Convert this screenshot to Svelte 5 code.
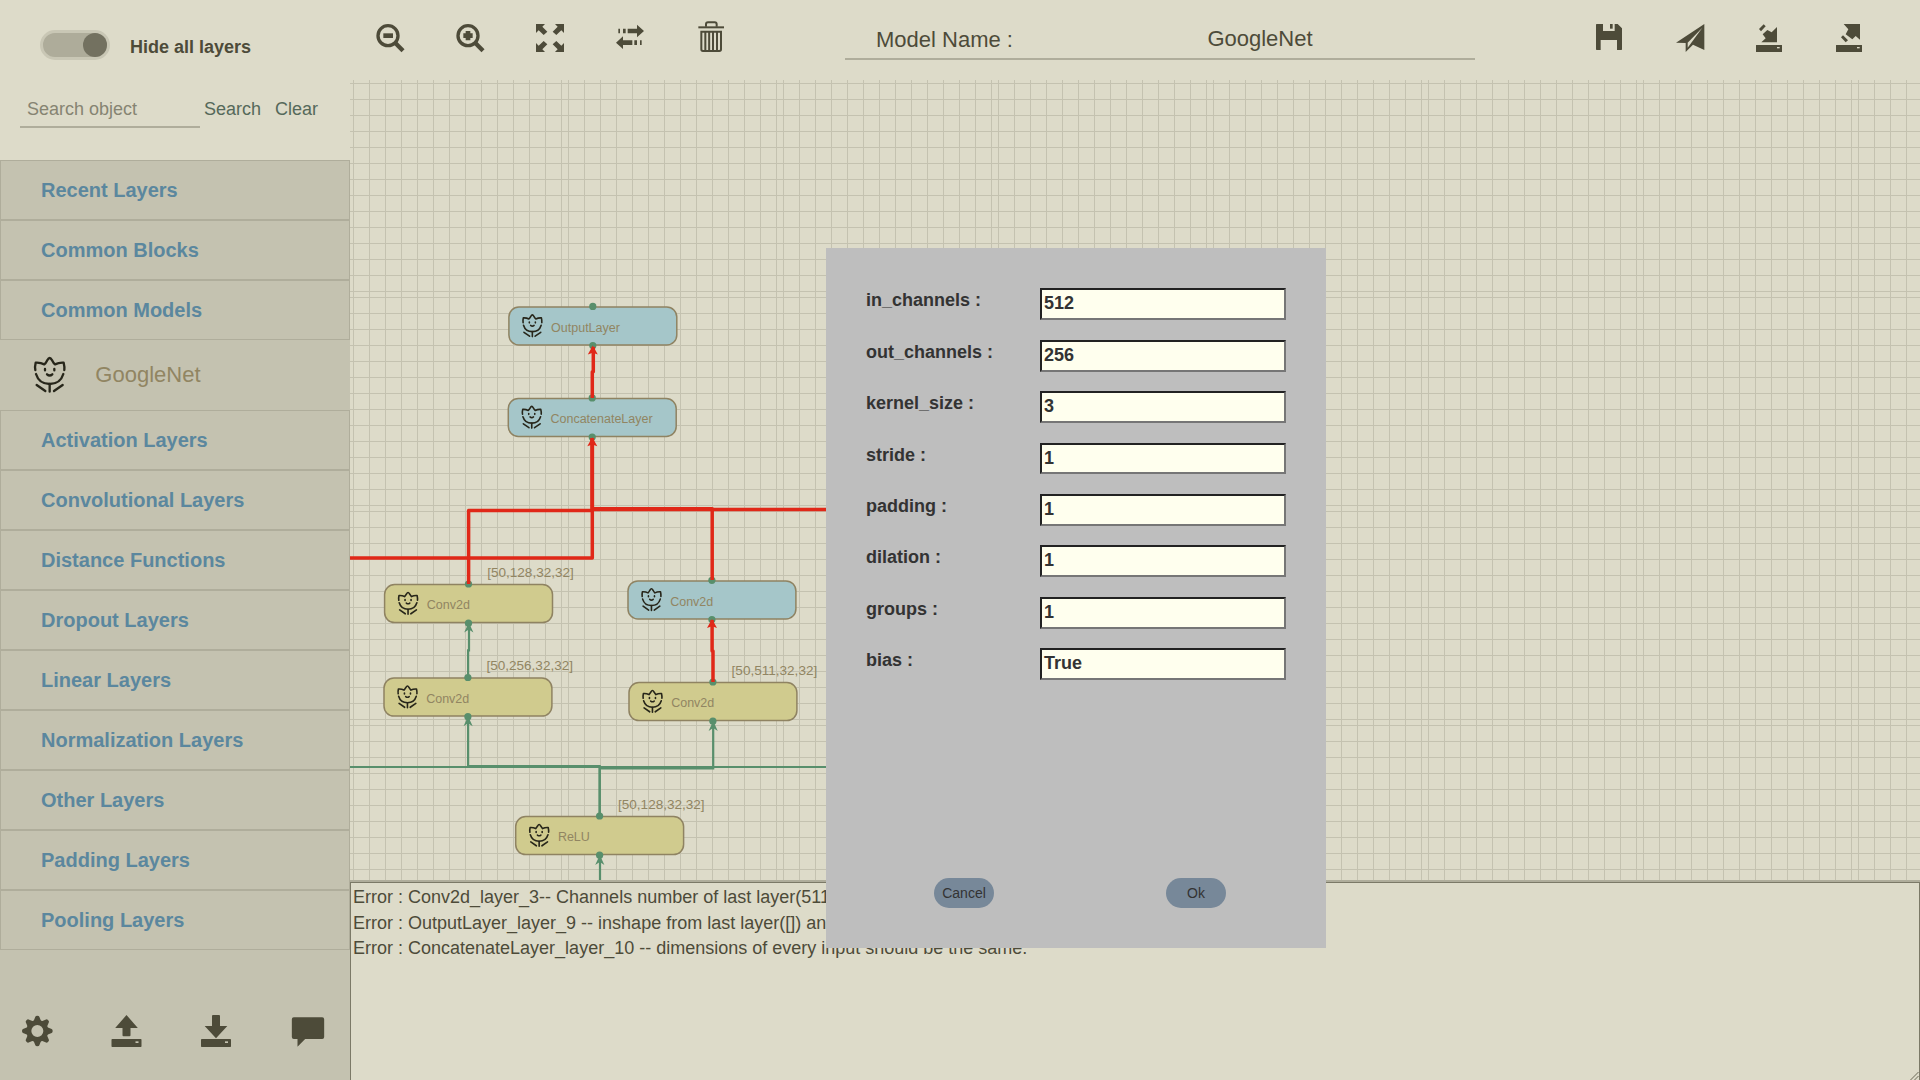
<script>
  const topGroups = ['Recent Layers', 'Common Blocks', 'Common Models'];
  const layerGroups = [
    'Activation Layers',
    'Convolutional Layers',
    'Distance Functions',
    'Dropout Layers',
    'Linear Layers',
    'Normalization Layers',
    'Other Layers',
    'Padding Layers',
    'Pooling Layers'
  ];

  const params = [
    ['in_channels', '512'],
    ['out_channels', '256'],
    ['kernel_size', '3'],
    ['stride', '1'],
    ['padding', '1'],
    ['dilation', '1'],
    ['groups', '1'],
    ['bias', 'True']
  ];

  const nodes = [
    { x: 508.9, y: 307, name: 'OutputLayer', bad: true },
    { x: 508.3, y: 398.5, name: 'ConcatenateLayer', bad: true },
    { x: 384.6, y: 584.6, name: 'Conv2d', bad: false },
    { x: 628, y: 580.9, name: 'Conv2d', bad: true },
    { x: 384, y: 678.1, name: 'Conv2d', bad: false },
    { x: 629, y: 682.6, name: 'Conv2d', bad: false },
    { x: 515.7, y: 816.6, name: 'ReLU', bad: false }
  ];

  const shapes = [
    { x: 487.2, y: 577, text: '[50,128,32,32]' },
    { x: 486.4, y: 670.2, text: '[50,256,32,32]' },
    { x: 731.6, y: 675.2, text: '[50,511,32,32]' },
    { x: 618, y: 809.2, text: '[50,128,32,32]' }
  ];

  const goodEdges = [
    'M468.1 677V650.3H469V623',
    'M468.1 717V766H599.7V815',
    'M713.2 721V768.3H599.7V815',
    'M350 767H900',
    'M600 856V880'
  ];
  const badEdges = [
    'M592.3 398V371.7H593.3V347',
    'M592.3 438V558H350',
    'M592.3 438V510.4H468.6V584',
    'M592.3 438V508.7H712.2V580',
    'M592.3 509.6H900',
    'M713 682V651H712.1V620'
  ];
  const goodArrows = [[468.8, 622.6], [468.1, 716.3], [713.2, 721], [599.8, 855]];
  const badArrows = [[592.8, 345.6], [592.3, 437.2], [712, 619]];

  const errors = [
    'Error : Conv2d_layer_3-- Channels number of last layer(511)',
    'Error : OutputLayer_layer_9 -- inshape from last layer([]) and',
    'Error : ConcatenateLayer_layer_10 -- dimensions of every input should be the same.'
  ];
</script>

{#snippet tulip()}
  <g class="tulip">
    <path d="M7 42Q5 32 8 20Q22 19 34 25Q38 22 42 14Q47 6 50 6Q53 6 58 14Q62 22 66 25Q78 19 92 20Q95 32 94 42" />
    <path d="M9 54Q18 84 50 84Q82 84 91 54" />
    <path d="M36 39V43M64 39V43M42 55Q50 62 58 55" />
    <path d="M50 84V107M11 87L37 105M89 87L63 105" />
  </g>
{/snippet}

<div class="app">
  <aside class="sidebar">
    <div class="toggle-row">
      <div class="toggle"><span class="knob"></span></div>
      <span class="toggle-label">Hide all layers</span>
    </div>
    <div class="search-row">
      <div class="search-field">Search object</div>
      <span class="link">Search</span>
      <span class="link">Clear</span>
    </div>

    {#each topGroups as g}<div class="group">{g}</div>{/each}
    <div class="model">
      <svg class="model-icon" width="33.33" height="37.33" viewBox="0 0 100 112">{@render tulip()}</svg>
      <span>GoogleNet</span>
    </div>
    {#each layerGroups as g}<div class="group">{g}</div>{/each}

    <div class="foot">
      <svg viewBox="0 0 262.5 390">
        <g transform="translate(112 243)">
          {#each [0, 45, 90, 135, 180, 225, 270, 315] as a}
            <path d="M-12 -28L-6 -43Q-5 -46 0 -46Q5 -46 6 -43L12 -28Z" transform="rotate({a})" />
          {/each}
          <circle r="25.5" class="ring" />
        </g>
      </svg>
      <svg viewBox="262.5 0 262.5 390">
        <path d="M378 195L412 234H390V256Q390 259 387 259H369Q366 259 366 256V234H344Z" />
        <rect x="333" y="267" width="90" height="24" rx="2" />
        <rect x="405" y="274" width="9" height="5" class="cut side" />
      </svg>
      <svg viewBox="525 0 262.5 390">
        <path d="M648 265L614 228H636V198Q636 195 639 195H657Q660 195 660 198V228H682Z" />
        <rect x="603" y="267" width="90" height="24" rx="2" />
        <rect x="675" y="274" width="9" height="5" class="cut side" />
      </svg>
      <svg viewBox="787.5 0 262.5 390">
        <path d="M880 202H965Q971 202 971 208V261Q971 267 965 267H914L891 290V267H880Q874 267 874 261V208Q874 202 880 202Z" />
      </svg>
    </div>
  </aside>

  <main class="main">
    <header class="bar">
      <div class="tools">
        <svg viewBox="29 0 240 240">
          <circle cx="143" cy="107" r="30" class="lens" />
          <path d="M165 129L188 152" class="handle" />
          <rect x="129" y="100" width="29" height="14" />
        </svg>
        <svg viewBox="269 0 240 240">
          <circle cx="383" cy="107" r="30" class="lens" />
          <path d="M405 129L428 152" class="handle" />
          <path d="M376 93H390V100H397V114H390V121H376V114H369V100H376Z" />
        </svg>
        <svg viewBox="510 0 240 240">
          <path d="M588 72H615L607 80L622 95L611 105L596 91L588 99Z" />
          <path d="M672 72H645L653 80L638 95L649 105L664 91L672 99Z" />
          <path d="M588 156H615L607 148L622 133L611 123L596 137L588 129Z" />
          <path d="M672 156H645L653 148L638 133L649 123L664 137L672 129Z" />
        </svg>
        <svg viewBox="750 0 240 240">
          <path d="M863 86H891V74L912 93L891 112V100H863Z" />
          <path d="M849 86H857V100H849ZM835 86H840V100H835Z" />
          <path d="M877 121H849V109L828 128L849 147V135H877Z" />
          <path d="M883 121H891V135H883ZM900 121H905V135H900Z" />
        </svg>
        <svg viewBox="990 0 240 240">
          <path d="M1075 79H1152V85H1075Z" />
          <path d="M1098 80V73Q1098 67 1104 67H1124Q1130 67 1130 73V80" class="line" />
          <path d="M1084 95H1143V148Q1143 153 1138 153H1089Q1084 153 1084 148Z" class="line" />
          <path d="M1096 95V153M1107.500 95V153M1119 95V153M1131 95V153" class="line" />
        </svg>
      </div>

      <div class="name-field">
        <span class="name-label">Model Name :</span>
        <span class="name-value">GoogleNet</span>
      </div>

      <div class="tools">
        <svg viewBox="30 0 240 240">
          <path d="M110 72H129V93H164V72H173L186 85V148Q186 150 184 150H171V120H122V150H110Q108 150 108 148V74Q108 72 110 72Z" />
          <rect x="150" y="72" width="8" height="14" />
        </svg>
        <svg viewBox="270 0 240 240">
          <path d="M433 72V150L399 134L377 156V129L348 128Z" />
          <path d="M427 83L383 128V143Z" class="cut" />
        </svg>
        <svg viewBox="510 0 240 240">
          <path d="M651 81V127H604L617 115L608 103L622 90L635 97Z" />
          <path d="M597 87L611 73L617 79L603 94Z" />
          <rect x="588" y="135" width="78" height="21" rx="1" />
          <rect x="651" y="141" width="8" height="4" class="cut" />
        </svg>
        <svg viewBox="750 0 240 240">
          <path d="M851 72H900V119L887 108L877 118L857 103L865 88Z" />
          <path d="M843 112L849 106L864 121L857 127Z" />
          <rect x="828" y="135" width="78" height="21" rx="1" />
          <rect x="891" y="141" width="8" height="4" class="cut" />
        </svg>
      </div>
    </header>

    <section class="canvas">
      <svg width="1570" height="800" viewBox="350 80 1570 800">
        {#each nodes as n}
          <g transform="translate({n.x} {n.y})">
            <rect width="167.9" height="38" rx="10" class="node" class:bad={n.bad} />
            <g transform="translate(12.7 6.6) scale(0.215)" class="small">{@render tulip()}</g>
            <text x="42.2" y="24.9" class="node-name">{n.name}</text>
            <circle cx="83.9" cy="-0.6" r="3.6" class="port" />
            <circle cx="83.9" cy="38.6" r="3.6" class="port" />
          </g>
        {/each}
        {#each shapes as s}<text x={s.x} y={s.y} class="shape">{s.text}</text>{/each}
        {#each goodEdges as d}<path {d} class="edge" />{/each}
        {#each badEdges as d}<path {d} class="edge bad" />{/each}
        {#each goodArrows as [x, y]}
          <path d="M0 0L4.600 10L0 7L-4.600 10Z" transform="translate({x} {y})" class="arrow" />
        {/each}
        {#each badArrows as [x, y]}
          <path d="M0 0L5 9L0 7.200L-5 9Z" transform="translate({x} {y})" class="arrow bad" />
        {/each}
      </svg>
    </section>

    <section class="log">
      {#each errors as e}<div>{e}</div>{/each}
      <svg class="grip" width="9" height="8" viewBox="0 0 9 8">
        <path d="M0.500 8L8.500 0M4.500 8L8.500 4" />
      </svg>
    </section>
  </main>

  <div class="dialog">
    <div class="params">
      {#each params as [label, value]}
        <div class="param">
          <span class="param-label">{label} :</span>
          <div class="param-input">{value}</div>
        </div>
      {/each}
    </div>
    <div class="actions">
      <button>Cancel</button>
      <button>Ok</button>
    </div>
  </div>
</div>

<style>
  :global(body) {
    margin: 0;
    overflow: hidden;
  }
  .app {
    --bg: #dddbc9;
    --panel: #c4c2b0;
    --line: #afad9b;
    --ink: #4d4b39;
    --brown: #918562;
    position: relative;
    display: flex;
    width: 1920px;
    height: 1080px;
    overflow: hidden;
    background: var(--bg);
    color: var(--ink);
    font-family: 'Liberation Sans', Arial, sans-serif;
  }
  .app * {
    box-sizing: border-box;
  }
  svg {
    display: block;
    fill: var(--ink);
  }

  /* Sidebar */
  .sidebar {
    display: flex;
    flex-direction: column;
    width: 350px;
    background: var(--panel);
  }
  .toggle-row {
    display: flex;
    height: 80px;
    padding: 30px 0 0 40px;
    background: var(--bg);
  }
  .toggle {
    display: flex;
    justify-content: flex-end;
    width: 70px;
    height: 30px;
    padding: 0;
    border: 3px solid #c9c7b5;
    border-radius: 15px;
    background: #aeac9a;
  }
  .knob {
    width: 24px;
    height: 24px;
    border-radius: 50%;
    background: #737160;
  }
  .toggle-label {
    margin: 7px 0 0 20px;
    font-size: 18px;
    font-weight: bold;
    line-height: 21px;
  }
  .search-row {
    display: flex;
    height: 80px;
    padding-left: 20px;
    background: var(--bg);
    font-size: 18px;
    line-height: 20px;
  }
  .search-field {
    width: 180px;
    height: 48px;
    padding: 19px 0 0 7px;
    border-bottom: 2px solid var(--line);
    color: #868472;
  }
  .link {
    margin: 19px 0 0 4px;
    color: #55695a;
  }
  .link + .link {
    margin-left: 14px;
  }
  .group {
    height: 60px;
    padding-left: 40px;
    border: 1px solid var(--line);
    color: #5b879e;
    font-size: 20px;
    font-weight: bold;
    line-height: 58px;
  }
  .model {
    display: flex;
    align-items: center;
    gap: 28.67px;
    height: 70px;
    padding-left: 33.33px;
    color: var(--brown);
    font-size: 22px;
  }
  .model-icon {
    margin-top: -1px;
  }
  .tulip path {
    fill: none;
    stroke: #27261a;
    stroke-width: 7;
    stroke-linecap: round;
    stroke-linejoin: round;
  }
  .small .tulip path,
  .small :global(.tulip path) {
    stroke-width: 7.5;
  }
  .foot {
    display: grid;
    grid-template-columns: repeat(4, 87.5px);
    height: 130px;
  }
  .foot svg {
    width: 87.5px;
    height: 130px;
  }
  .ring {
    fill: none;
    stroke: var(--ink);
    stroke-width: 15;
  }
  .cut {
    fill: var(--bg);
  }
  .cut.side {
    fill: var(--panel);
  }

  /* Toolbar */
  .main {
    display: flex;
    flex-direction: column;
    width: 1570px;
  }
  .bar {
    display: flex;
    justify-content: space-between;
    height: 80px;
    padding-right: 30px;
  }
  .tools {
    display: flex;
  }
  .tools svg {
    width: 80px;
    height: 80px;
  }
  .lens {
    fill: none;
    stroke: var(--ink);
    stroke-width: 10;
  }
  .handle {
    fill: none;
    stroke: var(--ink);
    stroke-width: 13;
  }
  .line {
    fill: none;
    stroke: var(--ink);
    stroke-width: 6;
  }
  .name-field {
    display: grid;
    grid-template-columns: 200px 1fr;
    width: 630px;
    height: 60px;
    border-bottom: 2px solid var(--line);
    font-size: 22px;
    line-height: 26px;
  }
  .name-label {
    padding: 27px 0 0 31px;
  }
  .name-value {
    padding-top: 26px;
    text-align: center;
  }

  /* Graph canvas */
  .canvas {
    height: 802px;
    border-bottom: 2px solid var(--line);
    background-image:
      repeating-linear-gradient(90deg, var(--panel) 0 1px, transparent 1px 16px),
      repeating-linear-gradient(180deg, var(--panel) 0 1px, transparent 1px 16px);
    background-size: 215px 214px;
    background-position: 3px 3px;
  }
  .node {
    fill: #d0cb8e;
    stroke: #8f8362;
    stroke-width: 1.5;
  }
  .node.bad {
    fill: #a5c6c9;
  }
  .node-name {
    fill: var(--brown);
    font-size: 12.5px;
  }
  .shape {
    fill: var(--brown);
    font-size: 13.55px;
  }
  .port,
  .arrow {
    fill: #588f6c;
  }
  .edge {
    fill: none;
    stroke: #588f6c;
    stroke-width: 2.2;
  }
  .edge.bad {
    stroke: #e02818;
    stroke-width: 3.5;
    stroke-linejoin: round;
  }
  .arrow.bad {
    fill: #e02818;
  }

  .log {
    position: relative;
    flex: 1;
    padding: 2px;
    border: 1px solid #7b7967;
    border-bottom: 0;
    font-size: 18px;
    line-height: 25.71px;
    white-space: nowrap;
  }
  .grip {
    position: absolute;
    right: 0;
    bottom: 0;
    fill: none;
    stroke: #6b6957;
    stroke-width: 1;
  }

  /* Parameter dialog */
  .dialog {
    position: absolute;
    left: 826px;
    top: 248px;
    width: 500px;
    height: 700px;
    padding: 40.38px 40px 40px 40px;
    display: flex;
    flex-direction: column;
    justify-content: space-between;
    background: #bebebe;
    color: #333;
  }
  .param {
    display: flex;
    justify-content: space-between;
    height: 51.42px;
    font-size: 18px;
    font-weight: bold;
  }
  .param-label {
    line-height: 24px;
  }
  .param-input {
    width: 246px;
    height: 31.72px;
    padding-left: 2px;
    border: 2px solid;
    border-color: #222 #767676 #767676 #222;
    background: #ffffee;
    line-height: 27px;
  }
  .actions {
    display: flex;
    justify-content: space-between;
    padding: 0 60px 0 68px;
  }
  button {
    width: 60px;
    height: 30px;
    padding: 0;
    border: 0;
    border-radius: 15px;
    background: #778899;
    color: #333;
    font: 14px 'Liberation Sans', Arial, sans-serif;
  }
</style>
